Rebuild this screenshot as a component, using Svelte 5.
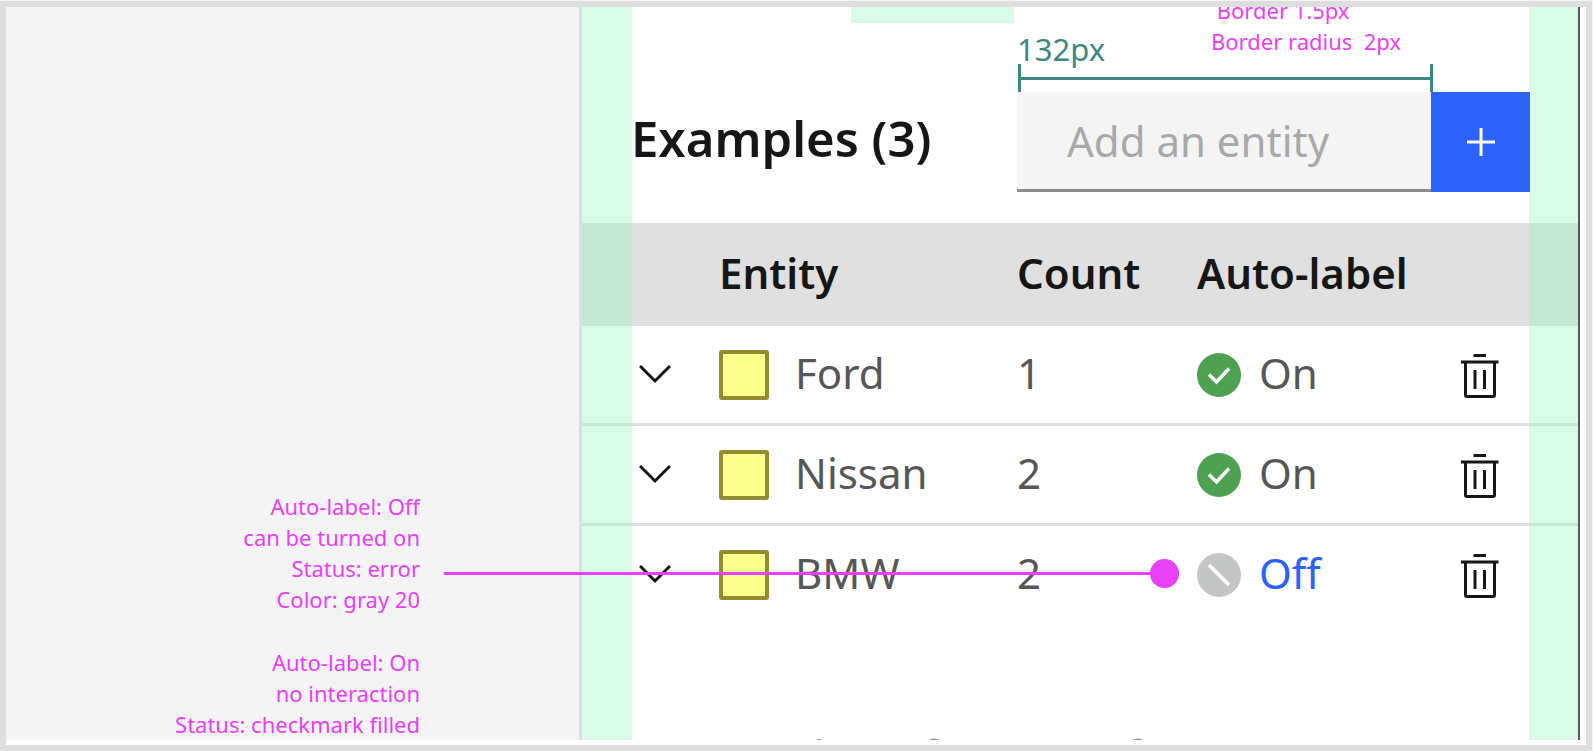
<script>
	let entities = [
		{ id: 1, name: 'Ford', count: 1, autoLabel: true },
		{ id: 2, name: 'Nissan', count: 2, autoLabel: true },
		{ id: 3, name: 'BMW', count: 2, autoLabel: false, callout: true }
	];

	let newEntity = '';

	function addEntity() {
		if (!newEntity.trim()) return;
		entities = [...entities, { id: Date.now(), name: newEntity.trim(), count: 0, autoLabel: false }];
		newEntity = '';
	}

	function removeEntity(id) {
		entities = entities.filter((entity) => entity.id !== id);
	}

	function turnOn(id) {
		entities = entities.map((entity) => (entity.id === id ? { ...entity, autoLabel: true } : entity));
	}
</script>

<main class="board">
	<aside class="notes">
		<p class="note">
			Auto-label: Off<br />can be turned on<br />Status: error<br />Color: gray 20
		</p>
		<p class="note">Auto-label: On<br />no interaction<br />Status: checkmark filled</p>
	</aside>

	<section class="panel">
		<div class="gutter left"></div>
		<div class="gutter right"></div>

		<div class="specs">
			<div class="spacer"></div>
			<div class="measure">
				<div class="measure-text">
					<span class="measure-label">132px</span>
					<p class="note spec-note">{' Border 1.5px\nBorder radius  2px'}</p>
				</div>
				<div class="bracket"></div>
			</div>
		</div>

		<form class="toolbar" on:submit|preventDefault={addEntity}>
			<h2>Examples ({entities.length})</h2>
			<div class="add">
				<input type="text" aria-label="Add an entity" placeholder="Add an entity" bind:value={newEntity} />
				<button class="add-button" aria-label="Add">
					<svg width="30" height="30" viewBox="0 0 30 30">
						<path d="M15 1v28M1 15h28" stroke="#fff" stroke-width="3" />
					</svg>
				</button>
			</div>
		</form>

		<table>
			<colgroup>
				<col class="col-toggle" />
				<col />
				<col class="col-count" />
				<col class="col-status" />
				<col class="col-delete" />
			</colgroup>
			<thead>
				<tr>
					<th></th>
					<th>Entity</th>
					<th>Count</th>
					<th>Auto-label</th>
					<th></th>
				</tr>
			</thead>
			<tbody>
				{#each entities as entity (entity.id)}
					<tr>
						<td class="toggle">
							<button class="icon" aria-label="Expand {entity.name}">
								<svg width="32" height="20" viewBox="0 0 32 20">
									<path d="M1 1l15 15L31 1" fill="none" stroke="#161616" stroke-width="3" />
								</svg>
							</button>
						</td>
						<td>
							<div class="cell">
								<span class="swatch"></span>
								<span class="value">{entity.name}</span>
							</div>
						</td>
						<td>
							<div class="cell"><span class="value">{entity.count}</span></div>
						</td>
						<td class="status">
							{#if entity.callout}
								<span class="callout"></span>
							{/if}
							<div class="cell">
								{#if entity.autoLabel}
									<svg width="44" height="44" viewBox="0 0 44 44">
										<circle cx="22" cy="22" r="22" fill="#4fa152" />
										<path d="M12 21.500l7.500 7.500L32 15.500" fill="none" stroke="#fff" stroke-width="3.500" />
									</svg>
									<span class="value">On</span>
								{:else}
									<svg width="44" height="44" viewBox="0 0 44 44">
										<circle cx="22" cy="22" r="22" fill="#c4c6c5" />
										<path d="M12 12l20 20" stroke="#fff" stroke-width="3.500" />
									</svg>
									<button class="value off" on:click={() => turnOn(entity.id)}>Off</button>
								{/if}
							</div>
						</td>
						<td>
							<button class="icon" aria-label="Delete {entity.name}" on:click={() => removeEntity(entity.id)}>
								<svg width="38" height="46" viewBox="0 0 38 46" fill="none" stroke="#161616" stroke-width="3">
									<path d="M12.500 3.500h12.500M0 10h37.500M14 18v19M23.500 18v19" />
									<path d="M4.500 10v33q0 1.500 1.500 1.500h26q1.500 0 1.500-1.500V10" />
								</svg>
							</button>
						</td>
					</tr>
				{/each}
			</tbody>
		</table>

		<!-- top edge of the next section, cut off by the board -->
		<svg class="next" height="2" width="330" viewBox="0 0 330 2" fill="#8a8a8a">
			<path d="M1 2q3-2 6 0zM114 2q5-3 10 0zM318 2q5-3 10 0z" />
		</svg>
	</section>
</main>

<style>
	:global(body) {
		margin: 0;
		background: #f4f4f4;
		font-family: 'Noto Sans', sans-serif;
	}

	.board {
		display: grid;
		grid-template-columns: 573fr 1001fr;
		box-sizing: border-box;
		min-height: calc(100vh - 1px);
		margin: 1px 1px 0 0;
		padding: 0 6px 5px 0;
		border: 6px solid #dedede;
		background: #fff;
		overflow: hidden;
	}

	.notes {
		display: flex;
		flex-direction: column;
		justify-content: flex-end;
		gap: 32px;
		padding-right: 159px;
		background: #f4f4f4;
		text-align: right;
	}

	.note {
		margin: 0;
		color: #e93ff7;
		font-size: 22px;
		line-height: 31px;
	}

	.panel {
		position: relative;
		display: flex;
		flex-direction: column;
		border-left: 3px solid #dedede;
		border-right: 2px solid #5a5a5a;
	}

	.gutter {
		position: absolute;
		top: 0;
		bottom: 0;
		width: 50px;
		background: rgba(152, 241, 193, 0.37);
		pointer-events: none;
	}

	.gutter.left {
		left: 0;
	}

	.gutter.right {
		right: 0;
		width: 49px;
	}

	.specs {
		display: flex;
		justify-content: flex-end;
		gap: 3px;
		height: 85px;
		padding-right: 145px;
	}

	.spacer {
		width: 163px;
		height: 16px;
		background: #d9fae8;
	}

	.measure {
		width: 416px;
	}

	.measure-text {
		display: flex;
		align-items: flex-end;
		height: 57px;
	}

	.measure-label {
		flex: 0 0 194px;
		color: #3b8782;
		font-size: 31px;
		line-height: 30px;
	}

	.spec-note {
		padding-bottom: 7px;
		white-space: pre;
	}

	/* dimension line with a tick at each end */
	.bracket {
		height: 28px;
		margin-left: 1px;
		border: solid #3b8782;
		border-width: 0 3px;
		box-sizing: border-box;
		background: linear-gradient(#3b8782, #3b8782) center / 100% 3px no-repeat;
	}

	.toolbar {
		position: relative;
		display: flex;
		justify-content: space-between;
		align-items: baseline;
		margin: 0 48px 31px 49px;
	}

	h2 {
		margin: 0;
		color: #161616;
		font-size: 49px;
		line-height: 60px;
		font-weight: 600;
	}

	.add {
		display: flex;
	}

	input {
		box-sizing: border-box;
		width: 414px;
		height: 100px;
		padding: 0 0 0 50px;
		border: 0;
		border-bottom: 3px solid #8d8d8d;
		border-radius: 0;
		background: #f4f4f4;
		color: #161616;
		font: inherit;
		font-size: 42px;
	}

	input::placeholder {
		color: #a8a8a8;
		opacity: 1;
	}

	button {
		display: flex;
		padding: 0;
		border: 0;
		background: none;
		font: inherit;
		cursor: pointer;
	}

	.add-button {
		align-items: center;
		justify-content: center;
		width: 99px;
		background: #2b62f9;
	}

	table {
		width: 100%;
		table-layout: fixed;
		border-spacing: 0;
	}

	.col-toggle {
		width: 137px;
	}

	.col-count {
		width: 180px;
	}

	.col-status {
		width: 264px;
	}

	.col-delete {
		width: 117px;
	}

	th {
		height: 99px;
		padding: 0 0 4px;
		background: #e0e0e0;
		color: #161616;
		font-size: 42px;
		line-height: 50px;
		font-weight: 600;
		text-align: left;
	}

	td {
		height: 97px;
		padding: 0;
		border-bottom: 3px solid #e0e0e0;
		color: #565656;
		font-size: 42px;
		line-height: 50px;
	}

	tr:last-child td {
		border-color: transparent;
	}

	.toggle {
		padding-left: 57px;
	}

	.cell {
		display: flex;
		align-items: center;
		gap: 18px;
	}

	.value {
		padding-bottom: 4px;
	}

	.swatch {
		box-sizing: border-box;
		width: 50px;
		height: 50px;
		margin-right: 8px;
		border: 4px solid #928b31;
		border-radius: 3px;
		background: #f9ff8a;
	}

	.status {
		position: relative;
	}

	.off {
		color: #2b62f9;
	}

	.callout {
		position: absolute;
		top: 50%;
		right: calc(100% + 18px);
		width: 735px;
		height: 3px;
		margin-top: -3px;
		background: #e93ff7;
	}

	.callout::after {
		content: '';
		position: absolute;
		top: -13px;
		right: 0;
		width: 29px;
		height: 29px;
		border-radius: 50%;
		background: #e93ff7;
	}

	.next {
		margin: auto 0 0 233px;
	}
</style>
